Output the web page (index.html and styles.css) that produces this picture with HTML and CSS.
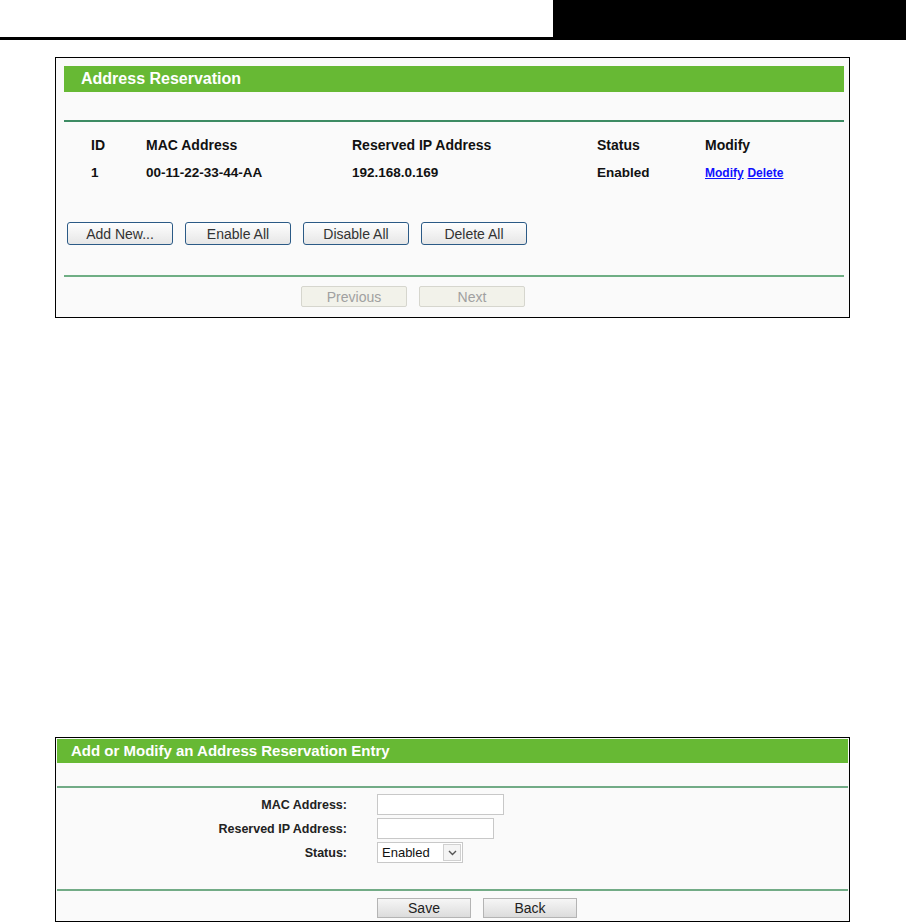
FILE: index.html
```html
<!DOCTYPE html>
<html lang="en">
<head>
    <meta charset="UTF-8">
    <title>Address Reservation</title>
    <link rel="stylesheet" href="styles.css">
</head>
<body>
    <div class="doc-head">
        <div class="doc-tab"></div>
    </div>

    <!-- Address Reservation list -->
    <div class="panel list-panel">
        <div class="bar">Address Reservation</div>
        <div class="rule dark"></div>
        <div class="table">
            <div class="th">ID</div>
            <div class="th">MAC Address</div>
            <div class="th">Reserved IP Address</div>
            <div class="th">Status</div>
            <div class="th">Modify</div>
            <div class="td">1</div>
            <div class="td">00-11-22-33-44-AA</div>
            <div class="td">192.168.0.169</div>
            <div class="td">Enabled</div>
            <div class="td"><a href="#">Modify</a> <a href="#">Delete</a></div>
        </div>
        <div class="actions">
            <button class="btn">Add New...</button>
            <button class="btn">Enable All</button>
            <button class="btn">Disable All</button>
            <button class="btn">Delete All</button>
        </div>
        <div class="rule light"></div>
        <div class="pager">
            <button class="btn-off" disabled>Previous</button>
            <button class="btn-off" disabled>Next</button>
        </div>
    </div>

    <!-- Add / modify entry -->
    <div class="panel edit-panel">
        <div class="bar small">Add or Modify an Address Reservation Entry</div>
        <div class="rule mid"></div>
        <div class="form">
            <label>MAC Address:</label>
            <input type="text" class="field mac">
            <label>Reserved IP Address:</label>
            <input type="text" class="field ip">
            <label>Status:</label>
            <div class="select">
                <span class="select-text">Enabled</span>
                <span class="select-arrow">
                    <svg width="9" height="6" viewBox="0 0 9 6"><path d="M1 1 L4.5 4.5 L8 1" fill="none" stroke="#555" stroke-width="1.4"/></svg>
                </span>
            </div>
        </div>
        <div class="rule mid bottom"></div>
        <div class="form-buttons">
            <button class="btn-grey">Save</button>
            <button class="btn-grey">Back</button>
        </div>
    </div>
</body>
</html>
```

FILE: styles.css
```css
* {
    margin: 0;
    padding: 0;
    box-sizing: border-box;
    font-family: 'Liberation Sans', Arial, sans-serif;
}

body {
    background: #fff;
    color: #000;
}

.doc-head {
    display: flex;
    height: 40px;
    border-bottom: 3px solid #000;
}

.doc-tab {
    margin-left: auto;
    width: 353px;
    background: #000;
}

.panel {
    width: 795px;
    margin-left: 55px;
    border: 1px solid #000;
    background: #fafafa;
}

.list-panel {
    margin-top: 17px;
    padding: 8px 5px 10px 8px;
}

.edit-panel {
    margin-top: 419px;
    padding: 1px 1px 3px 1px;
}

.bar {
    height: 26px;
    line-height: 26px;
    padding-left: 17px;
    background: #67b934;
    color: #fff;
    font-size: 16px;
    font-weight: bold;
}

.bar.small {
    height: 24px;
    line-height: 24px;
    padding-left: 14px;
    font-size: 15px;
}

.rule {
    height: 2px;
}

.rule.dark {
    margin-top: 28px;
    background: #3d8b63;
}

.rule.light {
    margin-top: 30px;
    background: #6fae84;
}

.rule.mid {
    margin-top: 23px;
    background: #72ab86;
}

.rule.bottom {
    margin-top: 26px;
}

.table {
    display: grid;
    grid-template-columns: 55px 206px 245px 108px auto;
    margin-top: 9px;
    padding-left: 27px;
}

.th, .td {
    height: 28px;
    line-height: 28px;
    font-weight: bold;
    color: #111;
}

.th {
    font-size: 14px;
}

.td {
    font-size: 13.5px;
}

.td a {
    color: #1010ff;
    font-size: 12px;
}

.actions {
    display: flex;
    gap: 12px;
    margin-top: 35px;
    padding-left: 3px;
}

.btn {
    width: 106px;
    height: 23px;
    border: 1px solid #2b5a86;
    border-radius: 3px;
    background: linear-gradient(#fefefe, #e6e6e6);
    font-size: 14px;
    color: #333;
}

.pager {
    display: flex;
    gap: 12px;
    margin-top: 9px;
    padding-left: 237px;
}

.btn-off {
    width: 106px;
    height: 21px;
    border: 1px solid #d6d6ce;
    border-radius: 2px;
    background: #f2f2ea;
    font-size: 14px;
    color: #a0a0a0;
}

.form {
    display: grid;
    grid-template-columns: 290px auto;
    column-gap: 30px;
    row-gap: 3px;
    margin-top: 6px;
    align-items: center;
}

.form label {
    text-align: right;
    font-size: 12.5px;
    font-weight: bold;
    color: #222;
}

.field {
    height: 21px;
    border: 1px solid #c8c8c8;
    background: #fff;
    outline: none;
}

.field.mac {
    width: 127px;
}

.field.ip {
    width: 117px;
}

.select {
    display: flex;
    width: 86px;
    height: 21px;
    border: 1px solid #c8c8c8;
    background: #fff;
}

.select-text {
    flex: 1;
    padding-left: 4px;
    line-height: 19px;
    font-size: 13px;
    color: #111;
}

.select-arrow {
    display: flex;
    align-items: center;
    justify-content: center;
    width: 18px;
    margin: 1px;
    border: 1px solid #d0d0d0;
    background: #f4f4f4;
}

.form-buttons {
    display: flex;
    gap: 12px;
    margin-top: 7px;
    padding-left: 320px;
}

.btn-grey {
    width: 94px;
    height: 20px;
    border: 1px solid #b4b4b4;
    background: linear-gradient(#f6f6f6, #dcdcdc);
    font-size: 14px;
    color: #222;
}
```
